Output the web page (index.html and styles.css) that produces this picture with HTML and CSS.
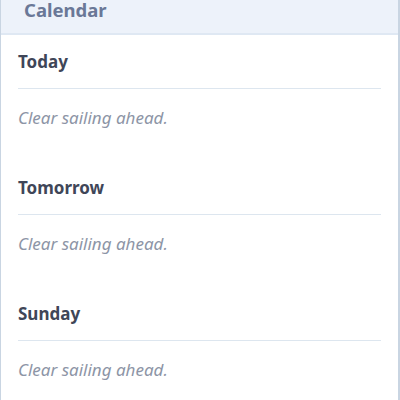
FILE: index.html
```html
<!DOCTYPE html>
<html>
<head>
<meta charset="utf-8">
<link rel="stylesheet" href="styles.css">
</head>
<body>
<div class="card">
  <div class="card-header">Calendar</div>
  <div class="card-body">
    <div class="day">
      <div class="day-title">Today</div>
      <div class="day-empty">Clear sailing ahead.</div>
    </div>
    <div class="day">
      <div class="day-title">Tomorrow</div>
      <div class="day-empty">Clear sailing ahead.</div>
    </div>
    <div class="day">
      <div class="day-title">Sunday</div>
      <div class="day-empty">Clear sailing ahead.</div>
    </div>
  </div>
</div>
</body>
</html>
```
FILE: styles.css
```css
html, body {
  margin: 0;
  padding: 0;
  background: #ffffff;
}
body {
  font-family: "Noto Sans", "Open Sans", sans-serif;
  overflow: hidden;
  height: 400px;
}
.card {
  border-left: 1px solid #c9d5e2;
  border-right: 2px solid #c9d5e2;
  height: 400px;
  box-sizing: border-box;
}
.card-header {
  background: #edf2fa;
  border-bottom: 2px solid #dfe8f3;
  height: 33px;
  box-sizing: content-box;
  padding: 0 0 0 23px;
  font-size: 18.5px;
  font-weight: 700;
  color: #6a7897;
  line-height: 20px;
}
.card-body {
  padding: 17px 17px 0 17px;
  display: flex;
  flex-direction: column;
  gap: 50px;
}
.day-title {
  font-size: 17px;
  font-weight: 700;
  color: #3f4658;
  line-height: 20px;
  padding-bottom: 16px;
  border-bottom: 1px solid #dde6ef;
}
.day-empty {
  margin-top: 19px;
  font-size: 17px;
  font-style: italic;
  color: #8d95a6;
  line-height: 20px;
}
```
